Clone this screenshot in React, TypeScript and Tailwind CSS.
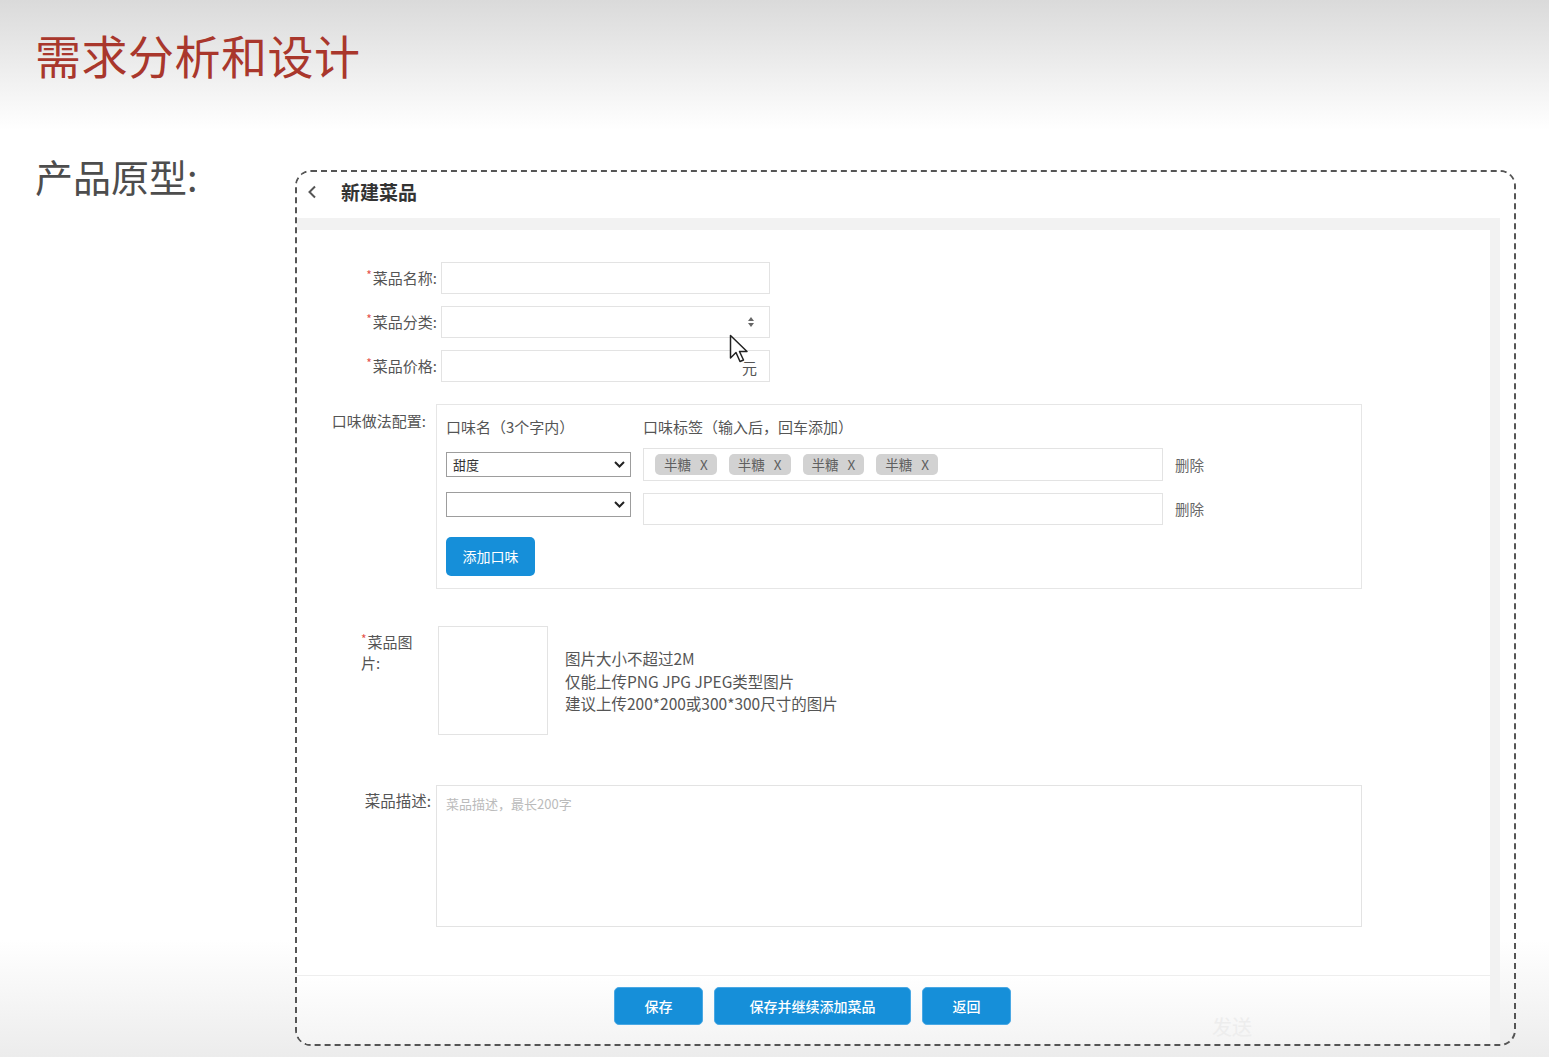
import React from "react";

const font = { fontFamily: '"Noto Sans CJK SC", "Noto Sans", sans-serif' };

const Req = () => <span className="inline-block text-[#e5534b] text-[12px] leading-none align-top mt-[2px] mr-[1px]">*</span>;

const Tag = ({ text }: { text: string }) => (
  <span className="flex items-center h-[21px] px-[9px] rounded-[5px] bg-[#d2d2d2] text-[#5f5f5f] text-[13.5px] leading-none gap-[9px]">
    <span>{text}</span>
    <span>X</span>
  </span>
);

const Chevron = () => (
  <svg width="11" height="7" viewBox="0 0 11 7" className="shrink-0">
    <path d="M1 1 L5.5 5.5 L10 1" fill="none" stroke="#222" strokeWidth="2" />
  </svg>
);

const FlavorSelect = ({ value }: { value?: string }) => (
  <div className="w-[185px] h-[25px] border-[1.5px] border-[#9d9d9d] flex items-center justify-between pl-[6px] pr-[5px] text-[13px] text-[#333] bg-white">
    <span>{value}</span>
    <Chevron />
  </div>
);

const BlueButton = ({ label, w }: { label: string; w: string }) => (
  <button className={`${w} h-[38px] rounded-[5px] bg-[#168fd9] border border-[#4aa8e4] text-white text-[14px] font-medium`}>
    {label}
  </button>
);

export default function App() {
  return (
    <div
      style={font}
      className="w-full h-[1057px] overflow-hidden bg-[linear-gradient(to_bottom,#dadada_0px,#ffffff_130px,#ffffff_940px,#ececec_1057px)]"
    >
      {/* slide title */}
      <div className="h-[130px] pl-[35px] pt-[31px]">
        <h1 className="text-[46px] leading-none text-[#a9372c] tracking-[0.5px]">需求分析和设计</h1>
      </div>

      <div className="flex">
        <div className="w-[295px] pl-[35px] pt-[27px] shrink-0">
          <div className="text-[38px] leading-none text-[#4d4d4d]">产品原型:</div>
        </div>

        {/* prototype frame */}
        <div className="mt-[40px] w-[1221px] h-[876px] border-2 border-dashed border-[#555] rounded-[16px] flex flex-col overflow-hidden">
          <div className="h-[46px] shrink-0 flex items-center pl-[10px] pb-[6px] bg-white">
            <svg width="10" height="14" viewBox="0 0 10 14">
              <path d="M8 1.5 L2.5 7 L8 12.5" fill="none" stroke="#555" strokeWidth="2" />
            </svg>
            <span className="ml-[24px] text-[19px] font-bold text-[#333]">新建菜品</span>
          </div>

          <div className="flex-1 mr-[14px] bg-[#f2f2f2] pt-[12px] pr-[10px] flex flex-col min-h-0">
            <div className="flex-1 bg-white flex flex-col min-h-0">
              <div className="relative flex-1 pt-[32px] text-[15px] text-[#555]">
                {/* 菜品名称 */}
                <div className="flex items-center">
                  <div className="w-[140px] text-right"><Req />菜品名称:</div>
                  <div className="ml-[4px] w-[329px] h-[32px] border border-[#e3e3e3]" />
                </div>
                {/* 菜品分类 */}
                <div className="flex items-center mt-[12px]">
                  <div className="w-[140px] text-right"><Req />菜品分类:</div>
                  <div className="ml-[4px] w-[329px] h-[32px] border border-[#e3e3e3] flex items-center justify-end pr-[14px]">
                    <svg width="8" height="12" viewBox="0 0 8 12">
                      <path d="M4 1 L7 5 L1 5 Z M4 11 L7 7 L1 7 Z" fill="#666" />
                    </svg>
                  </div>
                </div>
                {/* 菜品价格 */}
                <div className="flex items-center mt-[12px]">
                  <div className="w-[140px] text-right"><Req />菜品价格:</div>
                  <div className="ml-[4px] w-[329px] h-[32px] border border-[#e3e3e3] flex items-center justify-end pr-[12px]">
                    <span className="text-[15px] text-[#555] mt-[4px]">元</span>
                  </div>
                </div>

                {/* 口味做法配置 */}
                <div className="flex items-start mt-[22px]">
                  <div className="w-[129px] text-right pt-[6px] text-[15px] whitespace-nowrap">口味做法配置:</div>
                  <div className="ml-[10px] w-[926px] border border-[#e6e6e6] pl-[9px] pt-[12px] pb-[12px]">
                    <div className="flex leading-[20px]">
                      <div className="w-[197px]">口味名（3个字内）</div>
                      <div>口味标签（输入后，回车添加）</div>
                    </div>
                    <div className="flex items-center mt-[11px]">
                      <FlavorSelect value="甜度" />
                      <div className="ml-[12px] w-[520px] h-[33px] border border-[#e3e3e3] flex items-center pl-[11px] gap-[12px]">
                        <Tag text="半糖" />
                        <Tag text="半糖" />
                        <Tag text="半糖" />
                        <Tag text="半糖" />
                      </div>
                      <span className="ml-[12px] text-[14.5px] text-[#666]">删除</span>
                    </div>
                    <div className="flex items-start mt-[11px]">
                      <FlavorSelect />
                      <div className="ml-[12px] mt-[1px] w-[520px] h-[32px] border border-[#e3e3e3]" />
                      <span className="ml-[12px] mt-[6px] text-[14.5px] text-[#666]">删除</span>
                    </div>
                    <button className="mt-[12px] w-[89px] h-[39px] rounded-[5px] bg-[#168fd9] text-white text-[14px]">
                      添加口味
                    </button>
                  </div>
                </div>

                {/* 菜品图片 */}
                <div className="flex items-start mt-[37px]">
                  <div className="ml-[64px] w-[58px] pt-[5px] leading-[21px]">
                    <div><Req /><span>菜品图</span></div>
                    <div>片:</div>
                  </div>
                  <div className="ml-[19px] w-[110px] h-[109px] border border-[#e3e3e3] shrink-0" />
                  <div className="ml-[17px] self-center leading-[22.5px] mt-[1px] text-[15.5px]">
                    <div>图片大小不超过2M</div>
                    <div>仅能上传PNG JPG JPEG类型图片</div>
                    <div>建议上传200*200或300*300尺寸的图片</div>
                  </div>
                </div>

                {/* 菜品描述 */}
                <div className="flex items-start mt-[50px]">
                  <div className="w-[134px] text-right pt-[4px] text-[15.5px]">菜品描述:</div>
                  <textarea
                    className="ml-[5px] w-[926px] h-[142px] border border-[#e3e3e3] resize-none outline-none pl-[9px] pt-[8px] text-[13px] placeholder:text-[#bbb]"
                    placeholder="菜品描述，最长200字"
                  />
                </div>

                {/* mouse cursor */}
                <svg width="24" height="32" viewBox="0 0 24 32" className="absolute left-[432px] top-[104px]">
                  <path
                    d="M1.5 1.5 L1.5 24 L7 18.5 L11 27.5 L14.5 26 L10.5 17.5 L18 17.5 Z"
                    fill="#fff"
                    stroke="#222"
                    strokeWidth="1.5"
                    strokeLinejoin="round"
                  />
                </svg>
              </div>

              <div className="h-[69px] shrink-0 border-t border-[#eeeeee] bg-linear-to-b from-white to-[#f4f4f4] pl-[317px] pt-[11px] flex items-start gap-[11px] relative">
                <BlueButton label="保存" w="w-[89px]" />
                <BlueButton label="保存并继续添加菜品" w="w-[197px]" />
                <BlueButton label="返回" w="w-[89px]" />
                <span className="absolute left-[915px] top-[36px] text-[20px] text-[#ededed]">发送</span>
              </div>
            </div>
          </div>
        </div>
      </div>
    </div>
  );
}
